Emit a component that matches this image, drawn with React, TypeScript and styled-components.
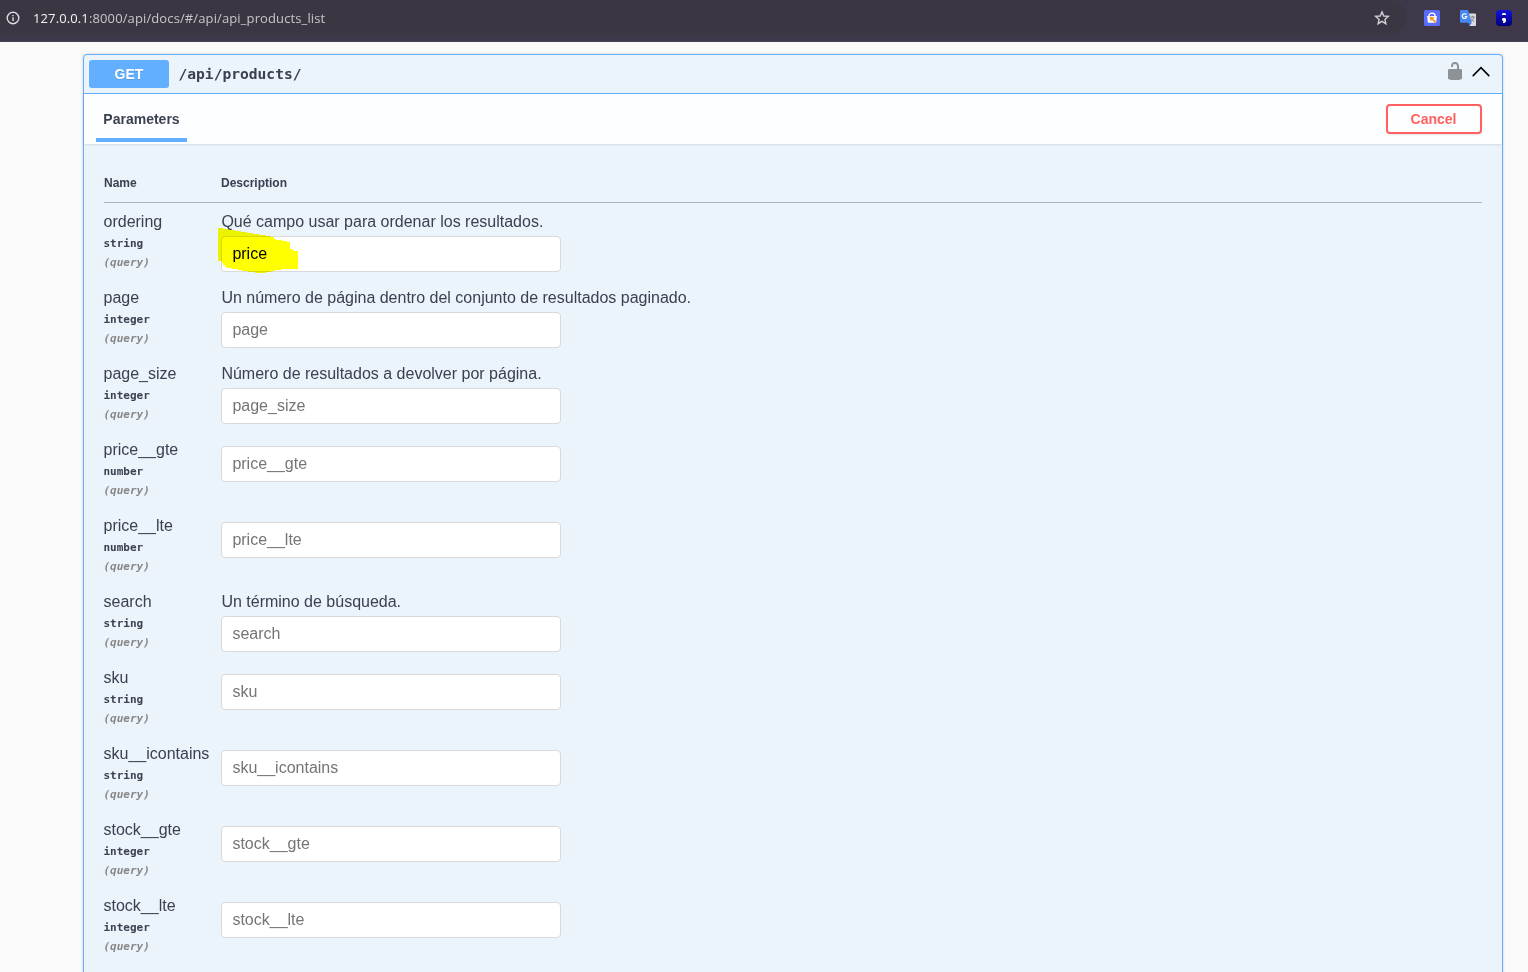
import React from 'react';
import styled, { createGlobalStyle } from 'styled-components';

const GlobalStyle = createGlobalStyle`
  * { box-sizing: border-box; }
  body {
    margin: 0;
    background: #fafafa;
    color: #3b4151;
    font-family: "Liberation Sans", Arial, sans-serif;
    overflow: hidden;
  }
`;

const mono = '"DejaVu Sans Mono", Consolas, monospace';

const Page = styled.div`
  height: 972px;
  display: flex;
  flex-direction: column;
  overflow: hidden;
`;

const BrowserBar = styled.header`
  flex: none;
  height: 42px;
  padding-bottom: 6px;
  background: #3f384b;
  border-bottom: 1px solid #4a4453;
  display: flex;
  align-items: stretch;
`;

const AddressBar = styled.div`
  width: 1406px;
  height: 35px;
  padding: 0 16px 0 6px;
  border-radius: 0 18px 18px 0;
  background: #3c3643;
  display: flex;
  align-items: center;
`;

const Url = styled.span`
  flex: 1;
  margin-left: 13px;
  font: 13px/20px "Open Sans", "Segoe UI", sans-serif;
  letter-spacing: 0.12px;
  color: #c8c5cc;
`;

const Host = styled.span`
  color: #f4f2f6;
`;

const Extensions = styled.div`
  display: flex;
  align-items: center;
  gap: 20px;
  padding: 1px 0 0 18px;
`;

const Operation = styled.section`
  flex: none;
  width: 1420px;
  height: 940px;
  margin: 12px 0 0 83px;
  border: 1px solid #61affe;
  border-radius: 4px;
  background: #ebf3fb;
  box-shadow: 0 0 3px rgba(0, 0, 0, 0.19);
`;

const Summary = styled.div`
  height: 39px;
  padding: 5px 11px 5px 5px;
  border-bottom: 1px solid #61affe;
  display: flex;
  align-items: center;
`;

const Method = styled.span`
  width: 80px;
  height: 28px;
  border-radius: 3px;
  background: #61affe;
  color: #fff;
  font-size: 14px;
  font-weight: 700;
  line-height: 28px;
  text-align: center;
  text-shadow: 0 1px 0 rgba(0, 0, 0, 0.1);
`;

const Path = styled.span`
  flex: 1;
  padding-left: 9.5px;
  font: 700 14.6px/20px ${mono};
`;

const SummaryIcons = styled.div`
  display: flex;
  align-items: center;
  gap: 6px;
  margin-bottom: 6px;
`;

const SectionHeader = styled.div`
  height: 50px;
  padding: 0 20px 0 12px;
  background: rgba(255, 255, 255, 0.85);
  box-shadow: 0 1px 2px rgba(0, 0, 0, 0.1);
  display: flex;
  align-items: center;
  justify-content: space-between;
`;

const Tab = styled.h4`
  width: 91px;
  height: 48px;
  margin: 0 0 2px;
  border-bottom: 4px solid #61affe;
  font-size: 14px;
  line-height: 50px;
  text-align: center;
`;

const CancelButton = styled.button`
  width: 96px;
  height: 30px;
  padding: 0 1px 0 0;
  border: 2px solid #ff6060;
  border-radius: 4px;
  background: transparent;
  box-shadow: 0 1px 2px rgba(0, 0, 0, 0.1);
  color: #ff6060;
  font: 700 14px/26px "Liberation Sans", Arial, sans-serif;
`;

const Table = styled.div`
  padding: 20px 20px 0;
`;

const TableHead = styled.div`
  display: grid;
  grid-template-columns: 117px 1fr;
  height: 39px;
  padding: 11px 0 0;
  border-bottom: 1px solid #a9b3c2;
  font-size: 12px;
  font-weight: 700;
  line-height: 16px;
`;

const Row = styled.div`
  display: grid;
  grid-template-columns: 117px 1fr;
  height: 76px;
`;

const NameCell = styled.div`
  padding-top: 9px;
  margin-left: -0.5px;
`;

const ParamName = styled.div`
  font-size: 16px;
  line-height: 20px;
  white-space: nowrap;
`;

const ParamType = styled.div`
  padding-top: 4px;
  font: 700 11px/16px ${mono};
`;

const ParamIn = styled.div`
  padding-top: 3px;
  font: italic 700 11px/16px ${mono};
  color: #888;
`;

const DescriptionCell = styled.div<{ $described: boolean }>`
  position: relative;
  padding-top: ${(p) => (p.$described ? 9 : 15)}px;
`;

const Description = styled.p`
  margin: 0 0 4px;
  padding-left: 0.4px;
  font-size: 16px;
  line-height: 20px;
`;

const Input = styled.input`
  display: block;
  width: 340px;
  height: 36px;
  padding: 0 10px 0 10.4px;
  border: 1px solid #d9d9d9;
  border-radius: 4px;
  background: #fff;
  color: #000;
  font: 16px "Liberation Sans", Arial, sans-serif;
  &::placeholder { color: #757575; opacity: 1; }
`;

const Marker = styled.svg`
  position: absolute;
  left: -3px;
  top: 24px;
  mix-blend-mode: multiply;
  pointer-events: none;
`;

type Param = { name: string; type: string; description?: string; value?: string };

const params: Param[] = [
  { name: 'ordering', type: 'string', description: 'Qué campo usar para ordenar los resultados.', value: 'price' },
  { name: 'page', type: 'integer', description: 'Un número de página dentro del conjunto de resultados paginado.' },
  { name: 'page_size', type: 'integer', description: 'Número de resultados a devolver por página.' },
  { name: 'price__gte', type: 'number' },
  { name: 'price__lte', type: 'number' },
  { name: 'search', type: 'string', description: 'Un término de búsqueda.' },
  { name: 'sku', type: 'string' },
  { name: 'sku__icontains', type: 'string' },
  { name: 'stock__gte', type: 'integer' },
  { name: 'stock__lte', type: 'integer' },
];

const InfoIcon = () => (
  <svg width="14" height="14" viewBox="0 0 14 14" fill="none" stroke="#dedbe2" strokeWidth="1.4">
    <circle cx="7" cy="7" r="5.8" />
    <path d="M7 6.3v3.7M7 3.9v1.4" />
  </svg>
);

const StarIcon = () => (
  <svg width="16" height="16" viewBox="0 0 16 16" fill="none" stroke="#d2cfd8" strokeWidth="1.4">
    <path d="M8 1.9 9.8 6l4.5.4-3.4 3 1 4.3L8 11.4l-3.9 2.3 1-4.3-3.4-3L6.2 6z" />
  </svg>
);

const BagIcon = () => (
  <svg width="16" height="16" viewBox="0 0 16 16">
    <rect width="16" height="16" rx="1.5" fill="#5a6cf8" />
    <path d="M3.2 6h9.6l-.5 5.8a1 1 0 0 1-1 .9H4.7a1 1 0 0 1-1-.9z" fill="#fff" />
    <path d="M5 6.5V5.6a3 2.4 0 0 1 6 0v.9" fill="none" stroke="#fff" strokeWidth="1.3" />
    <path d="m5.4 6.4 5.2 1.2-1.3 1.2 3.2 3.1-1.3 1.2L8 10.1l-1.2 1.2z" fill="#f59b23" />
  </svg>
);

const TranslateIcon = () => (
  <svg width="16" height="16" viewBox="0 0 16 16">
    <path d="M6 3.5h9.2a.8.8 0 0 1 .8.8V15a1 1 0 0 1-1 1H9.5z" fill="#dcdcdc" />
    <path d="M10.3 7h4.5M12.5 5.8V7M14 7c-.4 2-1.6 3.5-3 4.5M11.2 8.5c.7 1.5 1.8 2.6 3 3.4" stroke="#74858f" fill="none" />
    <path d="M1 0h7l3.7 12.8H1a1 1 0 0 1-1-1V1a1 1 0 0 1 1-1z" fill="#4688f1" />
    <path d="M8 12.8h3.7L9.4 16z" fill="#3367d6" />
    <path d="M6.4 4.7A2.3 2.3 0 1 0 6.8 6.5H4.8" stroke="#fff" strokeWidth="1.2" fill="none" />
  </svg>
);

const SemicolonIcon = () => (
  <svg width="16" height="16" viewBox="0 0 16 16">
    <defs>
      <linearGradient id="navy" x1="0" y1="0" x2="0" y2="1">
        <stop offset="0" stopColor="#1212e0" />
        <stop offset="1" stopColor="#000078" />
      </linearGradient>
    </defs>
    <rect width="16" height="16" rx="3.5" fill="url(#navy)" />
    <path d="M7 3h2l1 1v1H6V4z" fill="#fff" />
    <path d="M7 8h2l1 1v2.5L8.5 13H7v-1l.6-1L6 10.3V9z" fill="#fff" />
  </svg>
);

const UnlockIcon = () => (
  <svg width="20" height="20" viewBox="0 0 20 20" fill="#8d9296">
    <path d="M15.8 8H14V5.6C14 2.703 12.665 1 10 1 7.334 1 6 2.703 6 5.6V6h2v-.801C8 3.754 8.797 3 10 3c1.203 0 2 .754 2 2.199V8H4c-.553 0-1 .646-1 1.199V17c0 .549.428 1.139.951 1.307l1.197.387C5.672 18.861 6.55 19 7.1 19h5.8c.549 0 1.428-.139 1.951-.307l1.196-.387c.524-.167.953-.757.953-1.306V9.199C17 8.646 16.352 8 15.8 8z" />
  </svg>
);

const ChevronUp = () => (
  <svg width="20" height="20" viewBox="0 0 20 20" fill="none" stroke="#000" strokeWidth="1.6" strokeLinecap="round">
    <path d="m2.2 14.6 7.8-7.9 7.8 7.9" />
  </svg>
);

const HighlightStroke = () => (
  <Marker width="80" height="48" viewBox="0 0 80 48" shapeRendering="crispEdges">
    <path
      fill="#ff0"
      d="M0 1h5v1h6v1h6v1h6v1h6v1h6v1h6v1h7v1h4v1h4v2h2v1h6v1h5v1h3v7h3v2h5v1h2v17H63v1h-6v1h-4v1h-5v1H37v-1h-7v-1h-6v-1h-4v-1h-6v-1H9v-1H7v-2H5v-2H4v-2H0z"
    />
  </Marker>
);

export default function App() {
  return (
    <Page>
      <GlobalStyle />
      <BrowserBar>
        <AddressBar>
          <InfoIcon />
          <Url><Host>127.0.0.1</Host>:8000/api/docs/#/api/api_products_list</Url>
          <StarIcon />
        </AddressBar>
        <Extensions>
          <BagIcon />
          <TranslateIcon />
          <SemicolonIcon />
        </Extensions>
      </BrowserBar>
      <Operation>
        <Summary>
          <Method>GET</Method>
          <Path>/api/products/</Path>
          <SummaryIcons>
            <UnlockIcon />
            <ChevronUp />
          </SummaryIcons>
        </Summary>
        <SectionHeader>
          <Tab>Parameters</Tab>
          <CancelButton>Cancel</CancelButton>
        </SectionHeader>
        <Table>
          <TableHead>
            <span>Name</span>
            <span>Description</span>
          </TableHead>
          {params.map((p) => (
            <Row key={p.name}>
              <NameCell>
                <ParamName>{p.name}</ParamName>
                <ParamType>{p.type}</ParamType>
                <ParamIn>(query)</ParamIn>
              </NameCell>
              <DescriptionCell $described={!!p.description}>
                {p.description && <Description>{p.description}</Description>}
                <Input placeholder={p.name} defaultValue={p.value} />
                {p.value && <HighlightStroke />}
              </DescriptionCell>
            </Row>
          ))}
        </Table>
      </Operation>
    </Page>
  );
}
